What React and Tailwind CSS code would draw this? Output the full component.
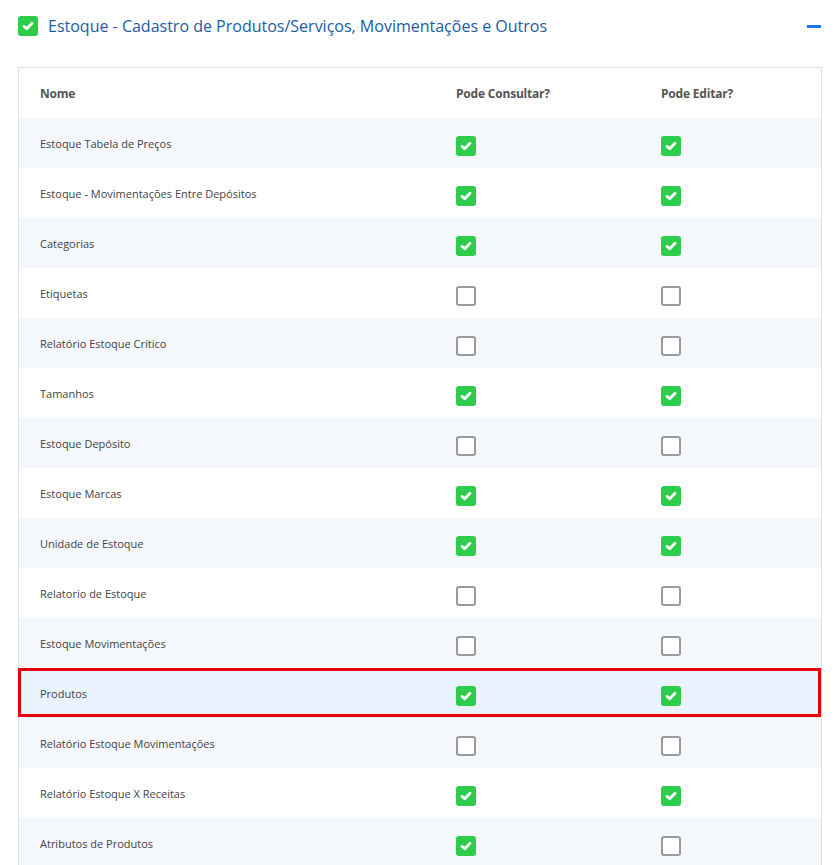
import React from "react";

const rows = [
  ["Estoque Tabela de Preços", true, true],
  ["Estoque - Movimentações Entre Depósitos", true, true],
  ["Categorias", true, true],
  ["Etiquetas", false, false],
  ["Relatório Estoque Crítico", false, false],
  ["Tamanhos", true, true],
  ["Estoque Depósito", false, false],
  ["Estoque Marcas", true, true],
  ["Unidade de Estoque", true, true],
  ["Relatorio de Estoque", false, false],
  ["Estoque Movimentações", false, false],
  ["Produtos", true, true, true],
  ["Relatório Estoque Movimentações", false, false],
  ["Relatório Estoque X Receitas", true, true],
  ["Atributos de Produtos", true, false],
];

function Box({ on }) {
  if (on)
    return (
      <div className="w-5 h-5 rounded-[3px] bg-[#2dcc4a] flex items-center justify-center">
        <svg width="12" height="10" viewBox="0 0 12 10">
          <path d="M2 5.4 L4.7 7.8 L10 2.2" fill="none" stroke="white" strokeWidth="2.8" strokeLinecap="round" strokeLinejoin="round" />
        </svg>
      </div>
    );
  return <div className="w-5 h-5 rounded-[3px] border-2 border-[#9a9a9a] bg-white" />;
}

export default function App() {
  return (
    <div className="w-[837px] h-[865px] bg-white overflow-hidden" style={{ fontFamily: '"Open Sans", sans-serif' }}>
      <div className="flex items-center h-[52px] pl-[18px] pr-[16px]">
        <Box on />
        <span className="ml-[10px] text-[16px] text-[#245aa6]">Estoque - Cadastro de Produtos/Serviços, Movimentações e Outros</span>
        <div className="ml-auto w-[14px] h-[3px] bg-[#1a73e8]" />
      </div>
      <div className="mt-[15px] ml-[18px] w-[804px] border border-[#dcdfe3] relative">
        <div className="grid grid-cols-[416px_205px_1fr] h-[50px] items-center pt-[2px] text-[12px] font-bold text-[#555] tracking-[-0.2px]">
          <div className="pl-[21px]">Nome</div>
          <div className="pl-[21px]">Pode Consultar?</div>
          <div className="pl-[21px]">Pode Editar?</div>
        </div>
        {rows.map(([name, a, b, hl], i) => (
          <div
            key={i}
            className={
              "relative grid grid-cols-[416px_205px_1fr] h-[50px] items-center text-[11px] text-[#444] " +
              (hl ? "bg-[#e9f3fd]" : i % 2 === 0 ? "bg-[#f4f7fb]" : "bg-white")
            }
          >
            <div className="pl-[21px] pt-[3px]">{name}</div>
            <div className="pl-[21px] pt-[6px]"><Box on={a} /></div>
            <div className="pl-[21px] pt-[6px]"><Box on={b} /></div>
            {hl && <div className="absolute left-[-1px] right-0 top-0 bottom-[1px] border-[3px] border-[#e8000b]" />}
          </div>
        ))}
      </div>
    </div>
  );
}
